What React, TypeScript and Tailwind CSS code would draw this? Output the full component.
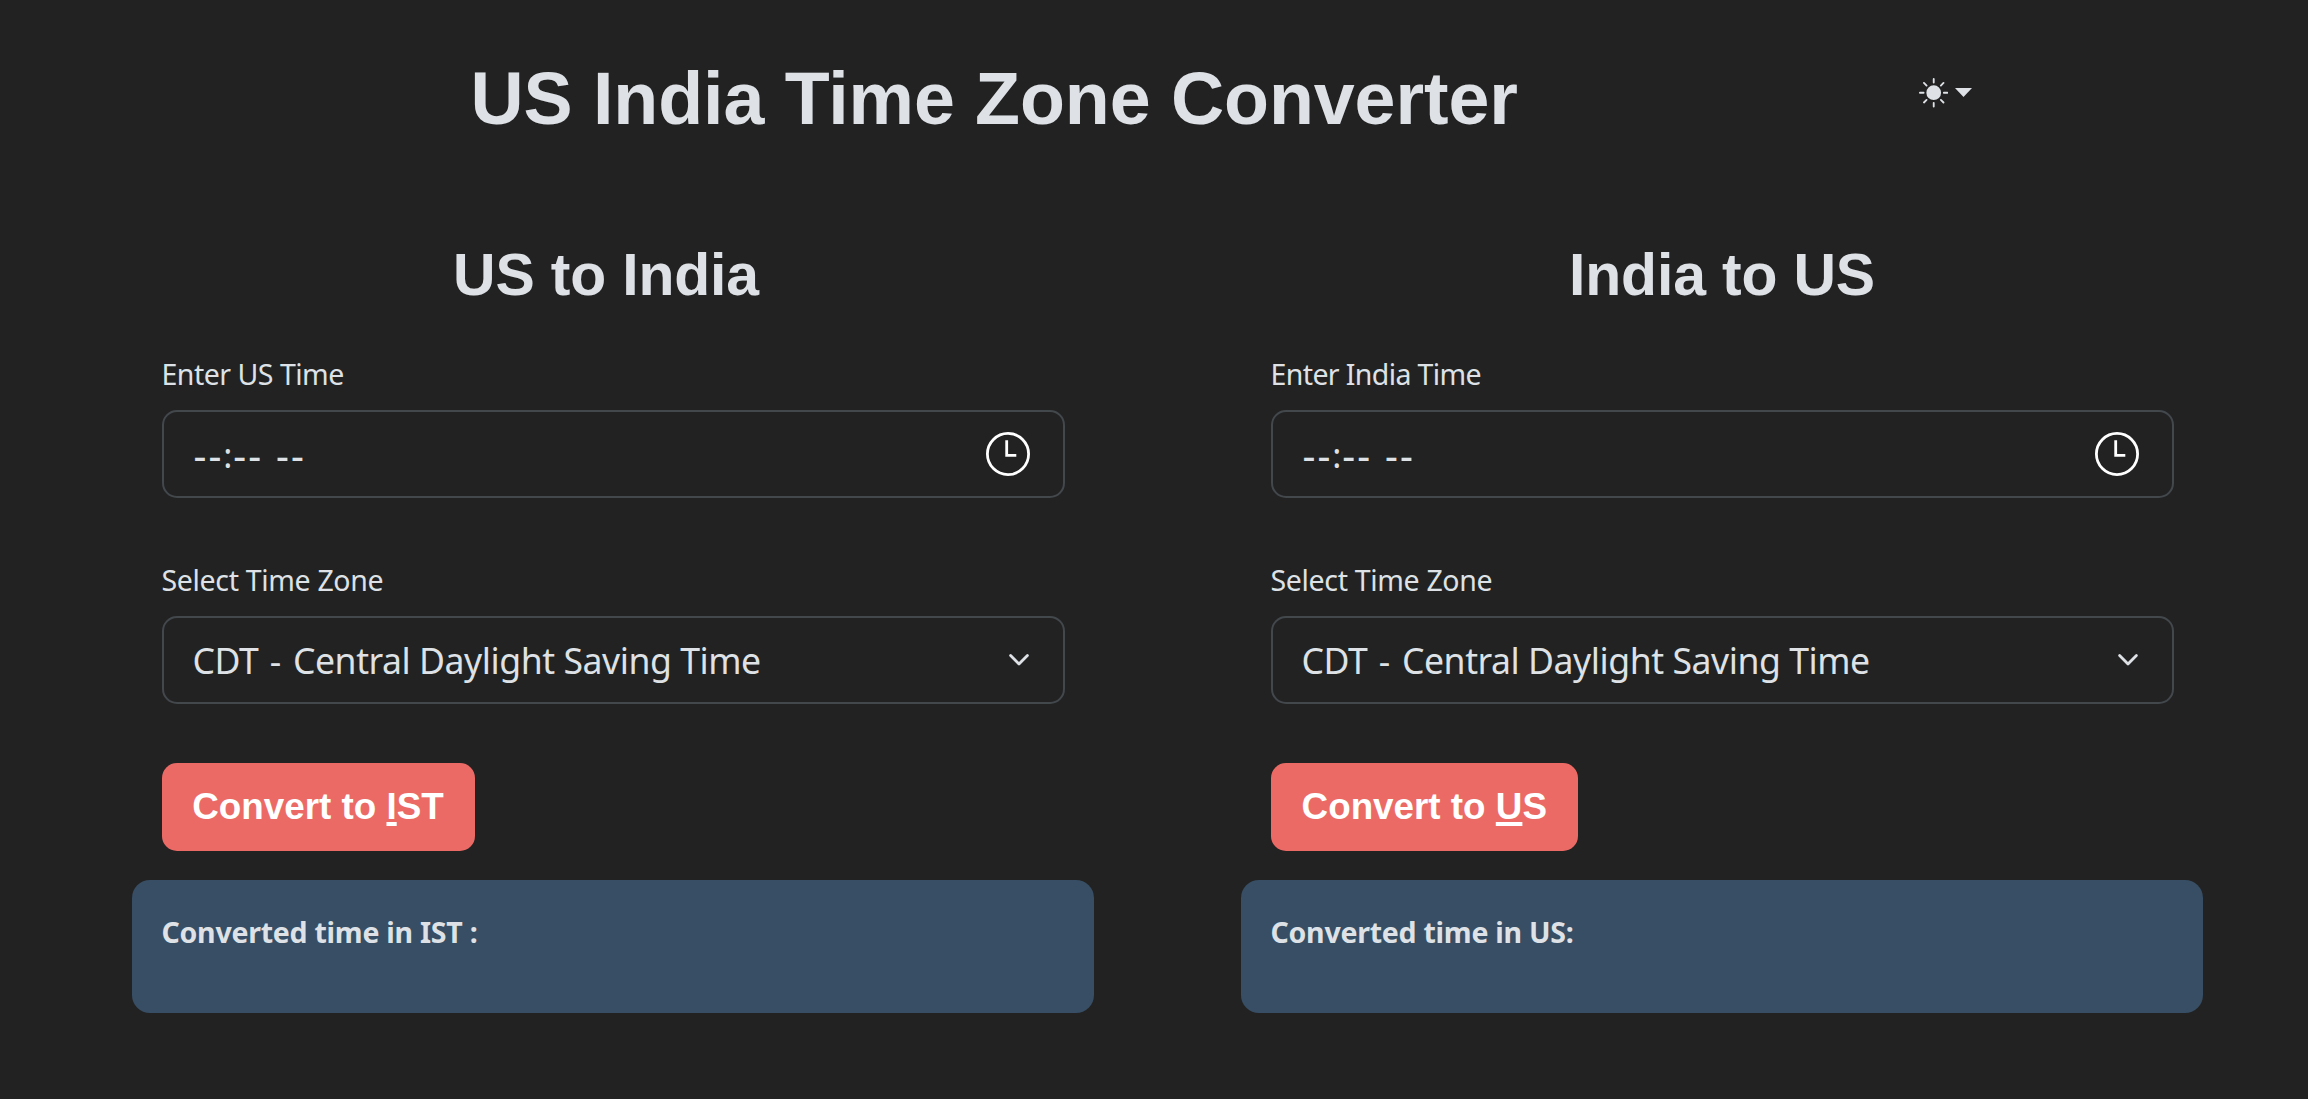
import { BsSunFill } from "react-icons/bs";

const sans = "font-['Noto_Sans','Open_Sans',sans-serif]";
const arial = "font-['Liberation_Sans',Arial,sans-serif]";

function ClockIcon() {
  return (
    <svg width="46" height="46" viewBox="0 0 46 46" fill="none" stroke="#fff">
      <circle cx="23" cy="23" r="20.6" strokeWidth="2.8" />
      <path d="M21.7 9.3V24.4H31.3" strokeWidth="2.8" />
    </svg>
  );
}

function ChevronIcon() {
  return (
    <svg width="22" height="14" viewBox="0 0 22 14" fill="none" stroke="#dee2e6" strokeWidth="2.8" strokeLinecap="round" strokeLinejoin="round">
      <path d="M2.6 2.6L11 11L19.4 2.6" />
    </svg>
  );
}

interface PanelProps {
  title: string;
  titleClass: string;
  timeLabel: string;
  timeLabelClass: string;
  accessKey: string;
  rest: string;
  buttonClass: string;
  result: string;
}

function Panel(p: PanelProps) {
  return (
    <section className="flex flex-col">
      <h2 className={`${arial} ${p.titleClass} h-[70px] text-center text-[58.88px] leading-[70px] font-bold tracking-[-0.15px] whitespace-nowrap`}>{p.title}</h2>
      <div className="mt-[42px] flex flex-col px-[29.5px]">
        <label className={`${sans} h-[44px] text-[28.5px] leading-[44px]`}>
          <span className={p.timeLabelClass}>{p.timeLabel}</span>
        </label>
        <div className="mt-[13.5px] flex h-[88.5px] items-center justify-between rounded-[15px] border-2 border-[#43484d] pr-[32px] pl-[30px]">
          <div className={`${sans} flex pt-[3px] text-[40px] leading-[50px] tracking-[2px]`}>
            <span>--</span>
            <span className="w-[10px] text-[34px] tracking-normal">:</span>
            <span>--</span>
            <span className="ml-[13px]">--</span>
          </div>
          <ClockIcon />
        </div>
        <label className={`${sans} mt-[60px] h-[44px] text-[28.5px] leading-[44px]`}>
          <span className="tracking-[-0.33px]">Select Time Zone</span>
        </label>
        <div className="mt-[13.5px] flex h-[88.5px] items-center justify-between rounded-[15px] border-2 border-[#43484d] pr-[33px] pl-[29px]">
          <span className={`${sans} pt-px text-[35.6px] leading-[50px] tracking-[-0.45px] whitespace-nowrap`}>
            CDT <span className="mr-[3.5px] ml-[2.5px]">-</span> Central Daylight Saving Time
          </span>
          <ChevronIcon />
        </div>
        <button className={`${arial} ${p.buttonClass} mt-[58.5px] h-[88.5px] rounded-[15px] bg-[#ec6a65] text-[36.8px] font-bold whitespace-nowrap text-white`}>
          Convert to <u className="decoration-[3.5px] underline-offset-[3px] [text-decoration-skip-ink:none]">{p.accessKey}</u>
          {p.rest}
        </button>
      </div>
      <div className="mt-[29px] h-[132.5px] rounded-[18px] bg-[#374e65] px-[29.5px] pt-[30px]">
        <p className={`${sans} text-[28.5px] leading-[44px] font-bold tracking-[-0.25px]`}>{p.result}</p>
      </div>
    </section>
  );
}

export default function App() {
  return (
    <main className="h-[1099px] w-[2308px] overflow-hidden bg-[#222] pt-[55px] text-[#dee2e6]">
      <header className="flex h-[88px] pl-[470.5px]">
        <h1 className={`${arial} w-[1448px] text-[73.6px] leading-[88px] font-bold tracking-[-0.08px] whitespace-nowrap`}>US India Time Zone Converter</h1>
        <button className="mt-[23px] flex h-[30px] items-center">
          <BsSunFill size={29.44} />
          <svg className="mb-px ml-[7px]" width="17" height="9" viewBox="0 0 17 9" fill="currentColor">
            <path d="M0 0H17L8.5 9Z" />
          </svg>
        </button>
      </header>
      <div className="mt-[97px] ml-[132px] grid grid-cols-[962px_962px] gap-[147px]">
        <Panel
          title="US to India"
          titleClass="pr-[14px]"
          timeLabel="Enter US Time"
          timeLabelClass="tracking-[-0.5px]"
          accessKey="I"
          rest="ST"
          buttonClass="w-[313px]"
          result="Converted time in IST :"
        />
        <Panel
          title="India to US"
          titleClass="pr-0"
          timeLabel="Enter India Time"
          timeLabelClass="tracking-[-0.62px]"
          accessKey="U"
          rest="S"
          buttonClass="w-[307.5px]"
          result="Converted time in US:"
        />
      </div>
    </main>
  );
}
